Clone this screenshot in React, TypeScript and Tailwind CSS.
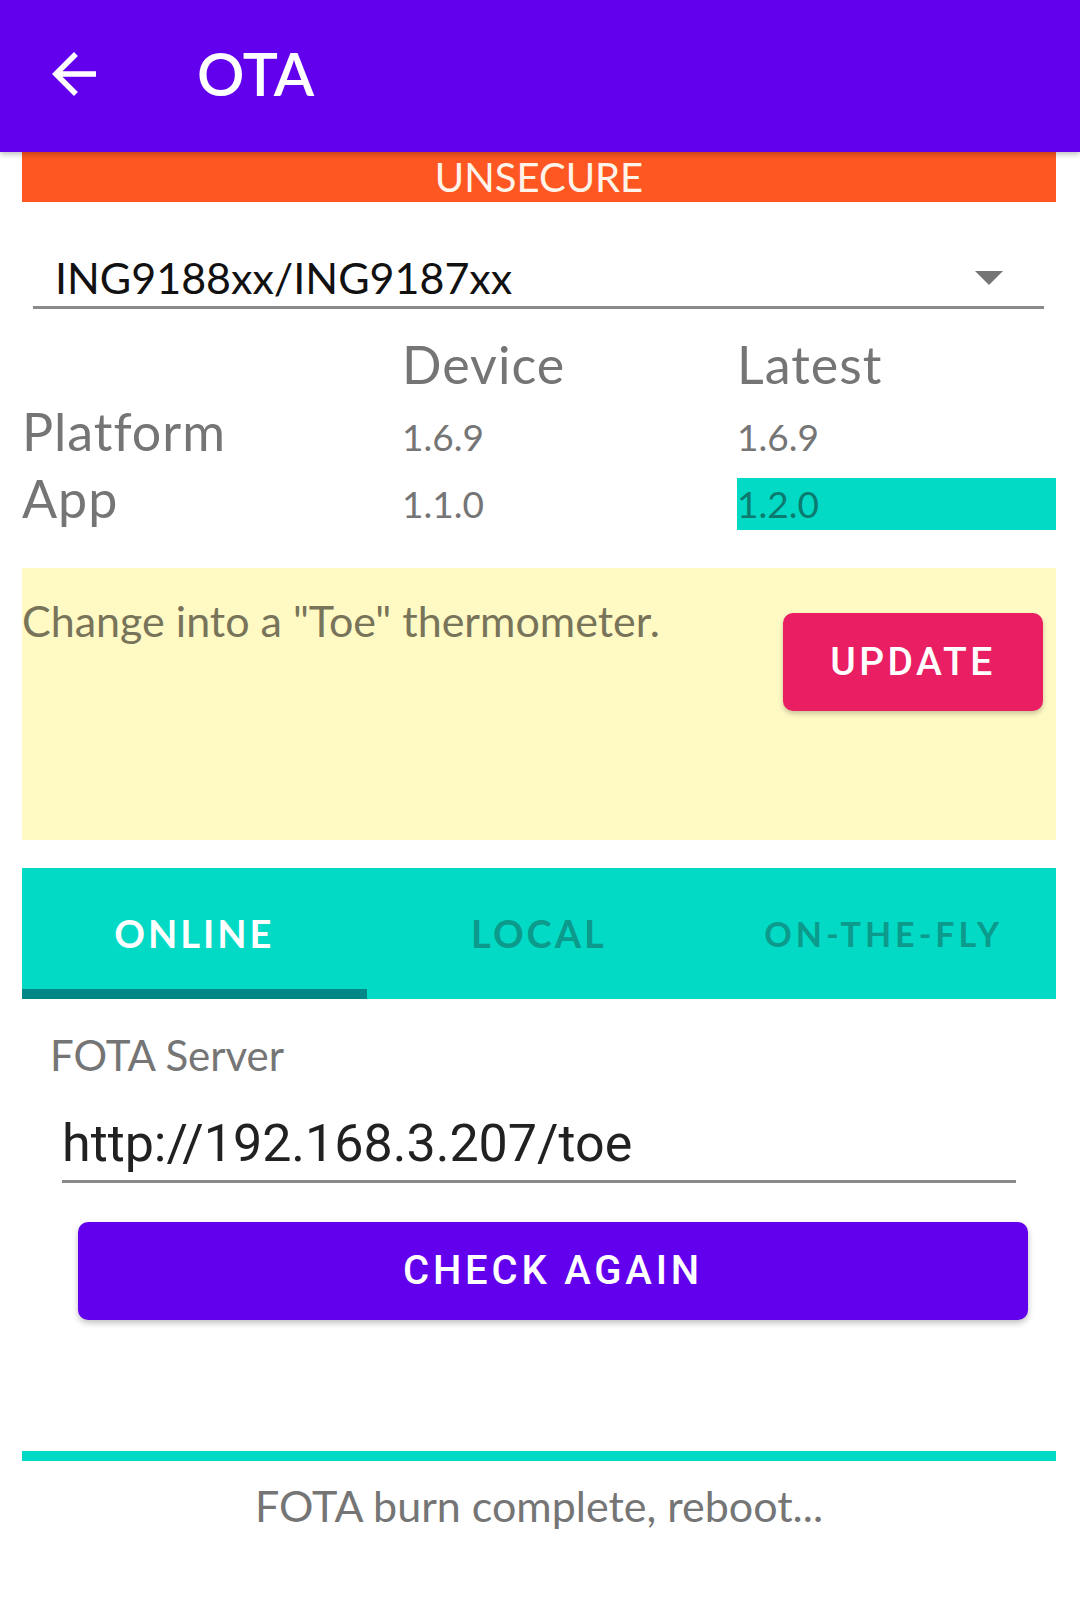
import React from "react";

export default function App() {
  const label = "text-[52px] leading-[67px] tracking-[1px] text-[#757575]";
  const value = "text-[37px] leading-[52px] text-[#757575]";
  return (
    <div className="w-[1080px] h-[1609px] bg-white overflow-hidden font-['Lato',sans-serif]">
      <header className="relative z-10 h-[152px] bg-[#6200EE] flex items-center shadow-[0_2px_6px_rgba(0,0,0,0.28)]">
        <svg className="ml-[41px] w-[66px] h-[66px] -mt-[4px]" viewBox="0 0 24 24" fill="white">
          <path d="M20 11H7.83l5.59-5.59L12 4l-8 8 8 8 1.41-1.41L7.83 13H20v-2z" />
        </svg>
        <span className="ml-[90px] -mt-[5px] text-white text-[59px] font-semibold leading-none">OTA</span>
      </header>

      <div className="pl-[22px] pr-[24px]">
        <div className="h-[50px] bg-[#FF5722] flex items-center justify-center text-[40px] leading-none text-[#FFF4EA]">
          UNSECURE
        </div>

        <div className="mt-[49px] ml-[11px] mr-[12px] border-b-[3px] border-[#8a8a8a] flex items-center pb-[1px]">
          <span className="flex-1 pl-[22px] text-[43px] leading-[54px] text-[#111]">ING9188xx/ING9187xx</span>
          <svg className="mr-[41px] w-[28px] h-[14px]" viewBox="0 0 28 14">
            <path d="M0 0h28L14 14z" fill="#757575" />
          </svg>
        </div>

        <div className="mt-[22px] grid grid-cols-[380px_335px_1fr] items-baseline">
          <div className={label}>{"\u00a0"}</div>
          <div className={label}>Device</div>
          <div className={label}>Latest</div>
          <div className={label}>Platform</div>
          <div className={value}>1.6.9</div>
          <div className={value}>1.6.9</div>
          <div className={label}>App</div>
          <div className={value}>1.1.0</div>
          <div className="text-[37px] leading-[52px] bg-[#03DAC5] text-[#0b7a6f]">1.2.0</div>
        </div>

        <div className="mt-[36px] h-[272px] bg-[#FFF9C4] flex items-start justify-between">
          <p className="pt-[27px] text-[43px] leading-[52px] text-[#78745a]">Change into a "Toe" thermometer.</p>
          <button className="mt-[45px] mr-[13px] w-[260px] h-[98px] rounded-[10px] bg-[#E91E63] text-white font-['Roboto',sans-serif] font-medium text-[39px] tracking-[3.5px] shadow-[0_3px_5px_rgba(0,0,0,0.2)]">
            UPDATE
          </button>
        </div>

        <div className="mt-[28px] h-[131px] bg-[#03DAC5] grid grid-cols-3">
          <div className="flex flex-col">
            <div className="flex-1 flex items-center justify-center pt-[10px] text-white font-bold text-[38px] tracking-[3px]">ONLINE</div>
            <div className="h-[10px] bg-[#018786]" />
          </div>
          <div className="flex flex-col">
            <div className="flex-1 flex items-center justify-center pt-[10px] text-[#0b9a8c] font-bold text-[38px] tracking-[3px]">LOCAL</div>
            <div className="h-[10px]" />
          </div>
          <div className="flex flex-col">
            <div className="flex-1 flex items-center justify-center pt-[10px] text-[#0b9a8c] font-bold text-[34px] tracking-[4px]">ON-THE-FLY</div>
            <div className="h-[10px]" />
          </div>
        </div>

        <div className="mt-[31px] ml-[28px] text-[42px] leading-[50px] text-[#757575]">FOTA Server</div>

        <div className="mt-[33px] ml-[40px] mr-[40px] border-b-[3px] border-[#8a8a8a] pb-[5px]">
          <span className="block font-['Roboto',sans-serif] text-[52px] leading-[62px] text-[#212121]">http://192.168.3.207/toe</span>
        </div>

        <button className="mt-[39px] ml-[56px] w-[950px] h-[98px] rounded-[10px] bg-[#6200EE] text-white font-['Roboto',sans-serif] font-medium text-[40px] tracking-[3.8px] shadow-[0_3px_6px_rgba(0,0,0,0.25)] block">
          CHECK AGAIN
        </button>

        <div className="mt-[131px] h-[10px] bg-[#03DAC5]" />

        <div className="mt-[19px] text-center text-[43px] leading-[52px] text-[#757575]">FOTA burn complete, reboot...</div>
      </div>
    </div>
  );
}
